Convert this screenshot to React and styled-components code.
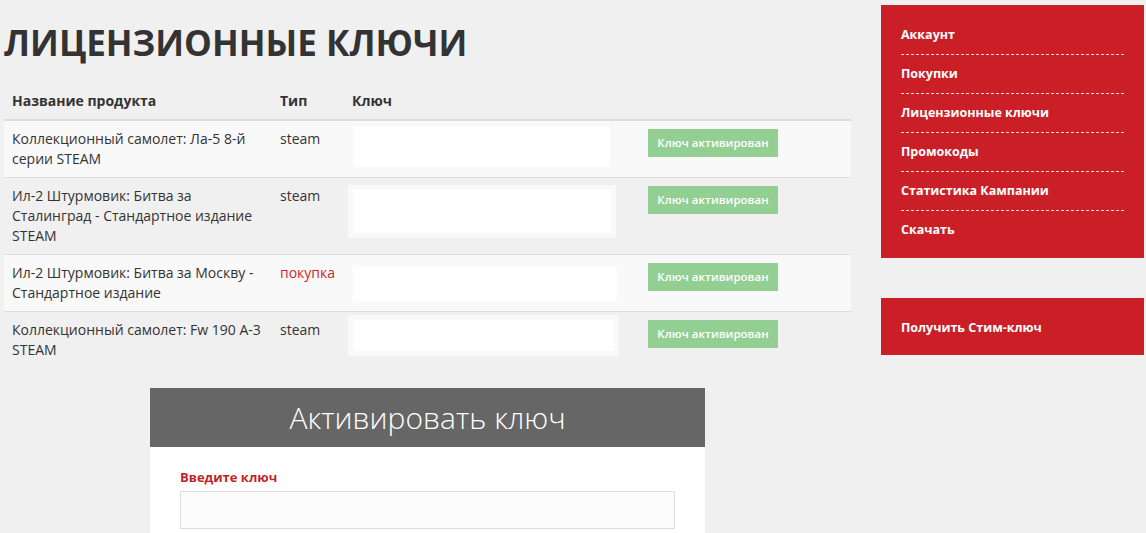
import React from 'react'
import styled, { createGlobalStyle } from 'styled-components'

const GlobalStyle = createGlobalStyle`
  html, body {
    margin: 0;
    padding: 0;
    background: #f0f0f0;
    font-family: "Open Sans", "Noto Sans", sans-serif;
    color: #333;
  }
  * { box-sizing: border-box; }
`

const keys = [
  { name: 'Коллекционный самолет: Ла-5 8-й серии STEAM', type: 'steam', top: 0, w: 267, h: 51 },
  { name: 'Ил-2 Штурмовик: Битва за Сталинград - Стандартное издание STEAM', type: 'steam', top: 7, w: 268, h: 53 },
  { name: 'Ил-2 Штурмовик: Битва за Москву - Стандартное издание', type: 'покупка', top: 7, w: 274, h: 44 },
  { name: 'Коллекционный самолет: Fw 190 A-3 STEAM', type: 'steam', top: 3, w: 271, h: 41 },
]

const menu = ['Аккаунт', 'Покупки', 'Лицензионные ключи', 'Промокоды', 'Статистика Кампании', 'Скачать']

function App() {
  return (
    <>
      <GlobalStyle />
      <Page>
        <Main>
          <Title>ЛИЦЕНЗИОННЫЕ КЛЮЧИ</Title>
          <Table>
            <colgroup>
              <col style={{ width: 268 }} />
              <col style={{ width: 72 }} />
              <col style={{ width: 296 }} />
              <col />
            </colgroup>
            <thead>
              <tr>
                <Th>Название продукта</Th>
                <Th>Тип</Th>
                <Th>Ключ</Th>
                <Th></Th>
              </tr>
            </thead>
            <tbody>
              {keys.map((k, i) => (
                <Row key={i} $odd={i % 2 === 0}>
                  <Td>{k.name}</Td>
                  <Td $red={k.type === 'покупка'}>{k.type}</Td>
                  <KeyCell>
                    <KeyBox $top={k.top} $w={k.w} $h={k.h} />
                  </KeyCell>
                  <Td>
                    <Activated>Ключ активирован</Activated>
                  </Td>
                </Row>
              ))}
            </tbody>
          </Table>

          <ActivateBox>
            <ActivateHead>Активировать ключ</ActivateHead>
            <ActivateBody>
              <Label>Введите ключ</Label>
              <KeyInput type="text" />
            </ActivateBody>
          </ActivateBox>
        </Main>

        <Sidebar>
          <RedBlock $menu>
            {menu.map((m, i) => (
              <MenuItem key={m} $last={i === menu.length - 1}>{m}</MenuItem>
            ))}
          </RedBlock>
          <RedBlock>
            <MenuItem $last $single>Получить Стим-ключ</MenuItem>
          </RedBlock>
        </Sidebar>
      </Page>
    </>
  )
}

const Page = styled.div`
  display: flex;
  align-items: flex-start;
  gap: 30px;
  padding: 5px 2px 0 4px;
  min-height: 533px;
`

const Main = styled.div`
  width: 847px;
  flex-shrink: 0;
`

const Title = styled.h1`
  margin: 18px 0 20px;
  font-size: 35px;
  line-height: 40px;
  font-weight: 700;
  color: #333;
`

const Table = styled.table`
  width: 847px;
  table-layout: fixed;
  border-collapse: collapse;
  font-size: 14px;
  line-height: 20px;
`

const Th = styled.th`
  text-align: left;
  padding: 8px;
  font-weight: 700;
  border-bottom: 2px solid #ddd;
`

const Row = styled.tr`
  background: ${p => (p.$odd ? '#f9f9f9' : 'transparent')};
  border-top: 1px solid #ddd;
`

const Td = styled.td`
  vertical-align: top;
  padding: 8px;
  color: ${p => (p.$red ? '#cc1f2d' : '#333')};
`

const KeyCell = styled.td`
  vertical-align: top;
  padding: 0 4px;
`

const KeyBox = styled.div`
  margin-top: ${p => p.$top}px;
  width: ${p => p.$w}px;
  height: ${p => p.$h}px;
  background: #fff;
  border: 5px solid #f9f9f9;
`

const Activated = styled.div`
  display: inline-flex;
  align-items: center;
  justify-content: center;
  width: 130px;
  height: 28px;
  background: #93cf93;
  color: #fff;
  font-size: 11.5px;
  font-weight: 600;
`

const ActivateBox = styled.div`
  width: 555px;
  margin: 20px auto 0;
  background: #fff;
`

const ActivateHead = styled.div`
  height: 59px;
  background: #666;
  color: #fff;
  font-size: 30px;
  font-weight: 300;
  display: flex;
  align-items: center;
  justify-content: center;
`

const ActivateBody = styled.div`
  padding: 20px 30px 20px;
`

const Label = styled.div`
  font-size: 13px;
  line-height: 20px;
  font-weight: 700;
  color: #c41f27;
  margin-bottom: 4px;
`

const KeyInput = styled.input`
  display: block;
  width: 100%;
  height: 38px;
  background: #fbfbfb;
  border: 1px solid #ddd;
  outline: none;
`

const Sidebar = styled.div`
  width: 263px;
  flex-shrink: 0;
  display: flex;
  flex-direction: column;
  gap: 40px;
`

const RedBlock = styled.div`
  background: #cb1f28;
  padding: ${p => (p.$menu ? '11px 20px 9px' : '0 20px')};
`

const MenuItem = styled.div`
  color: #fff;
  font-size: 12.5px;
  font-weight: 700;
  line-height: 18px;
  padding: ${p => (p.$single ? '21px 0 18px' : '10px 0')};
  border-bottom: ${p => (p.$last ? 'none' : '1px dashed rgba(255, 255, 255, 0.85)')};
`

export default App
